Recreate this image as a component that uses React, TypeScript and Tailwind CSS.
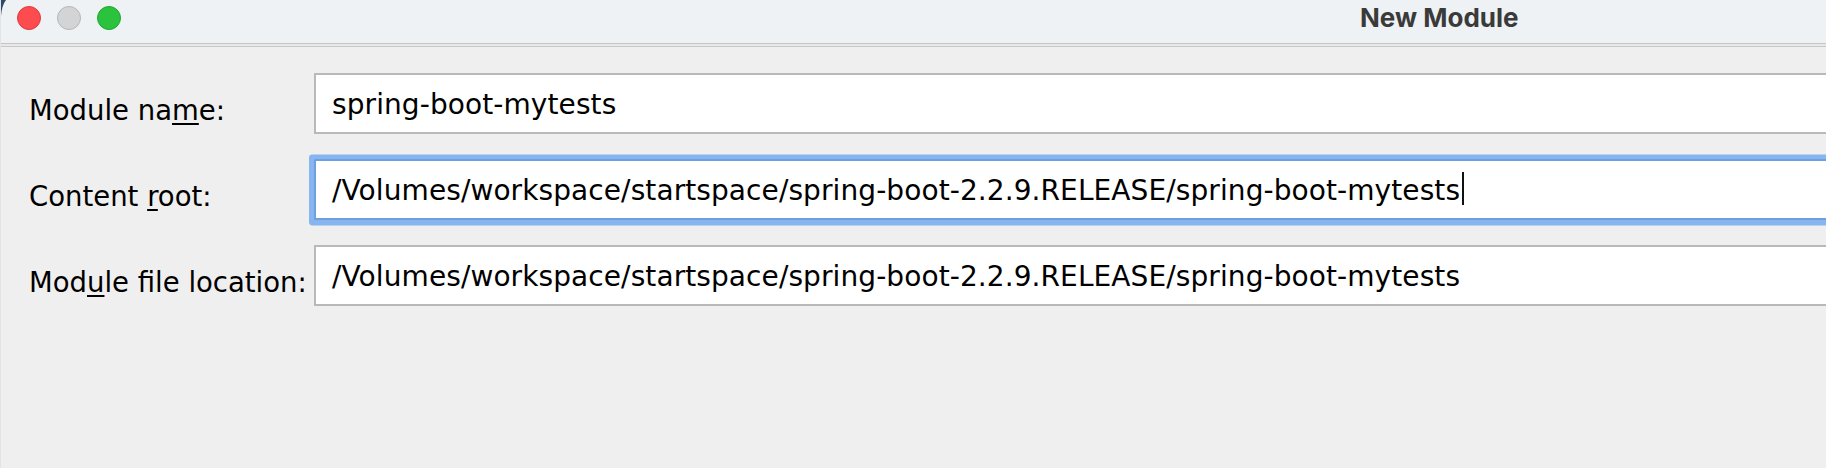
export default function App() {
  const path = "/Volumes/workspace/startspace/spring-boot-2.2.9.RELEASE/spring-boot-mytests";
  const labelCls =
    "w-[285px] shrink-0 pt-[21px] leading-[33px] text-[27.5px] text-black whitespace-nowrap";
  const mn = "underline decoration-[2px] underline-offset-[3px]";
  const fieldText =
    "pl-[16px] pt-[2px] text-[28px] leading-[55px] tracking-[0.09px] text-black whitespace-nowrap";
  return (
    <div className="relative w-[1826px] h-[468px] overflow-hidden bg-[#efefef] font-['DejaVu_Sans',sans-serif] border-l border-[#e4e4e4]">
      <svg className="absolute left-0 top-0" width="8" height="18" viewBox="0 0 8 18">
        <path d="M0 0H5Q1 5 0 16Z" fill="#2d4a6a" />
      </svg>
      {/* title bar */}
      <div className="h-[43px] bg-[#eef2f4] flex items-start">
        <div className="flex gap-[16px] pl-[16px] pt-[6px]">
          <div className="w-[24px] h-[24px] rounded-full bg-[#fd4c4f] border border-[#e0393c]" />
          <div className="w-[24px] h-[24px] rounded-full bg-[#d2d4d5] border border-[#b4b6b7]" />
          <div className="w-[24px] h-[24px] rounded-full bg-[#2bc23e] border border-[#1fa630]" />
        </div>
        <div className="ml-[1239px] font-['Inter',sans-serif] font-bold text-[26px] leading-[35px] text-[#3a3a3a] whitespace-nowrap">
          New Module
        </div>
      </div>
      <div className="h-[1px] bg-[#c4c5c6]" />
      <div className="h-[2px] bg-[#e7e8e8]" />
      <div className="h-[1px] bg-[#c9c9c9]" />
      {/* form */}
      <div className="flex flex-col gap-[25px] pt-[26px] pl-[28px]">
        <div className="flex items-start h-[61px]">
          <div className={labelCls}>
            Module na<span className={mn}>m</span>e:
          </div>
          <div className="w-[1560px] shrink-0 h-[61px] border-2 border-[#b9b9b9] bg-white">
            <div className={fieldText}>spring-boot-mytests</div>
          </div>
        </div>
        <div className="flex items-start h-[61px]">
          <div className={labelCls}>
            Content <span className={mn}>r</span>oot:
          </div>
          <div className="w-[1560px] shrink-0 h-[61px] border-2 border-[#6e9fe1] rounded-[1px] bg-white shadow-[0_0.5px_0_5px_#87b5f0]">
            <div className={fieldText}>
              {path}
              <span className="inline-block w-[2px] h-[33px] ml-[2px] bg-[#111] align-[-5px]" />
            </div>
          </div>
        </div>
        <div className="flex items-start h-[61px]">
          <div className={labelCls}>
            Mod<span className={mn}>u</span>le file location:
          </div>
          <div className="w-[1560px] shrink-0 h-[61px] border-2 border-[#b9b9b9] bg-white">
            <div className={fieldText}>{path}</div>
          </div>
        </div>
      </div>
    </div>
  );
}
